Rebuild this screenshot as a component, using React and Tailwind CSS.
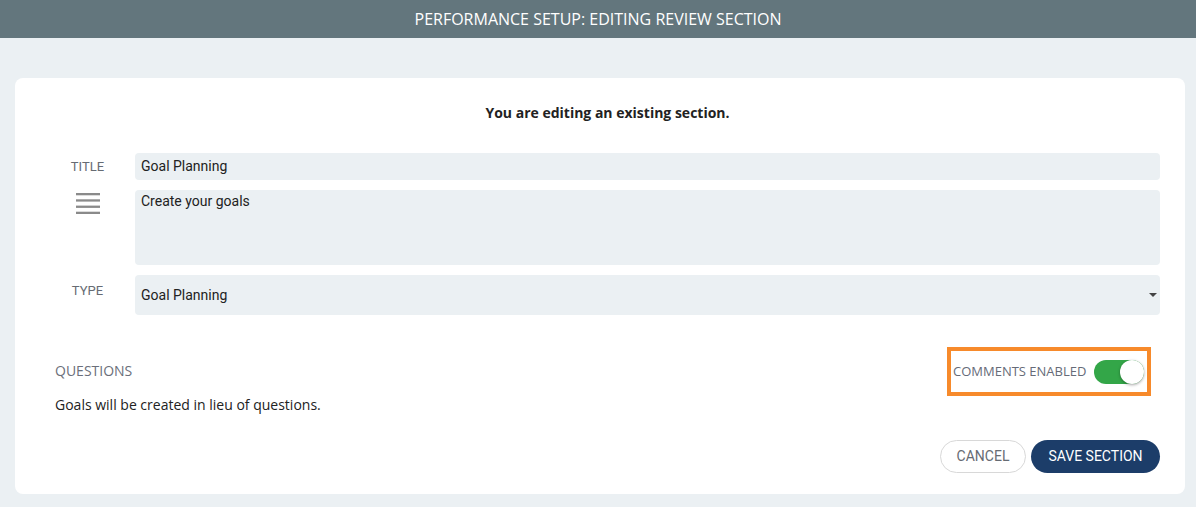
export default function App() {
  return (
    <div className="min-h-[507px] w-[1196px] bg-[#ebf0f3]" style={{ fontFamily: '"Open Sans", sans-serif' }}>
      <div className="h-[38px] bg-[#63767d] flex items-center justify-center">
        <span className="text-white text-[16px]">PERFORMANCE SETUP: EDITING REVIEW SECTION</span>
      </div>
      <div className="pt-[40px] pl-[15px] pr-[11px] pb-[13px]">
        <div className="bg-white rounded-[8px] h-[416px] pt-[24px] pl-[40px] pr-[25px]">
          <div className="text-center text-[14px] font-bold text-[#222]">You are editing an existing section.</div>
          <div className="mt-[30px] flex flex-col gap-[10px]" style={{ fontFamily: 'Roboto, sans-serif' }}>
            <div className="flex items-center">
              <div className="w-[65px] mr-[15px] text-[13px] text-[#666b73] flex justify-center">TITLE</div>
              <div className="flex-1 h-[27px] bg-[#ebf0f3] rounded-[4px] flex items-center px-[6px] text-[14px] text-[#222]">Goal Planning</div>
            </div>
            <div className="flex items-start">
              <div className="w-[65px] mr-[15px] flex justify-center pt-[3px]">
                <svg width="24" height="21" viewBox="0 0 24 21">
                  <rect x="0" y="0" width="24" height="2.3" fill="#8a8a8a" />
                  <rect x="0" y="6.3" width="24" height="2.3" fill="#8a8a8a" />
                  <rect x="0" y="12.6" width="24" height="2.3" fill="#8a8a8a" />
                  <rect x="0" y="18.7" width="24" height="2.3" fill="#8a8a8a" />
                </svg>
              </div>
              <div className="flex-1 h-[75px] bg-[#ebf0f3] rounded-[4px] px-[6px] pt-[1px] text-[14px] text-[#222]">Create your goals</div>
            </div>
            <div className="flex items-start">
              <div className="w-[65px] mr-[15px] text-[13px] text-[#666b73] flex justify-center pt-[6px]">TYPE</div>
              <div className="flex-1 h-[40px] bg-[#ebf0f3] rounded-[4px] flex items-center justify-between pl-[6px] pr-[3px] text-[14px] text-[#222]">
                <span>Goal Planning</span>
                <svg width="8" height="4" viewBox="0 0 8 4"><path d="M0 0 L8 0 L4 4 Z" fill="#444" /></svg>
              </div>
            </div>
          </div>
          <div className="mt-[32px] flex items-start justify-between pr-[9px]">
            <div className="pt-[13px]">
              <div className="text-[14px] text-[#6b6f7a]">QUESTIONS</div>
              <div className="mt-[13px] text-[14px] text-[#222]">Goals will be created in lieu of questions.</div>
            </div>
            <div className="border-[4px] border-[#f78a2b] h-[49px] w-[204px] flex items-center pl-[2px] gap-[8px]">
              <span className="text-[13px] text-[#666b78] whitespace-nowrap">COMMENTS ENABLED</span>
              <div className="w-[50px] h-[24px] shrink-0 rounded-full bg-[#33a648] relative">
                <div className="absolute right-0 top-0 w-[24px] h-[24px] rounded-full bg-white shadow-[0_1px_3px_rgba(0,0,0,0.35)]" />
              </div>
            </div>
          </div>
          <div className="mt-[25px] flex justify-end gap-[5px]" style={{ fontFamily: 'Roboto, sans-serif' }}>
            <button className="h-[33px] w-[86px] rounded-full border border-[#d8d8d8] text-[14px] text-[#666b73] bg-white">CANCEL</button>
            <button className="h-[33px] w-[129px] rounded-full bg-[#1c3d69] text-[14px] text-white">SAVE SECTION</button>
          </div>
        </div>
      </div>
    </div>
  );
}
